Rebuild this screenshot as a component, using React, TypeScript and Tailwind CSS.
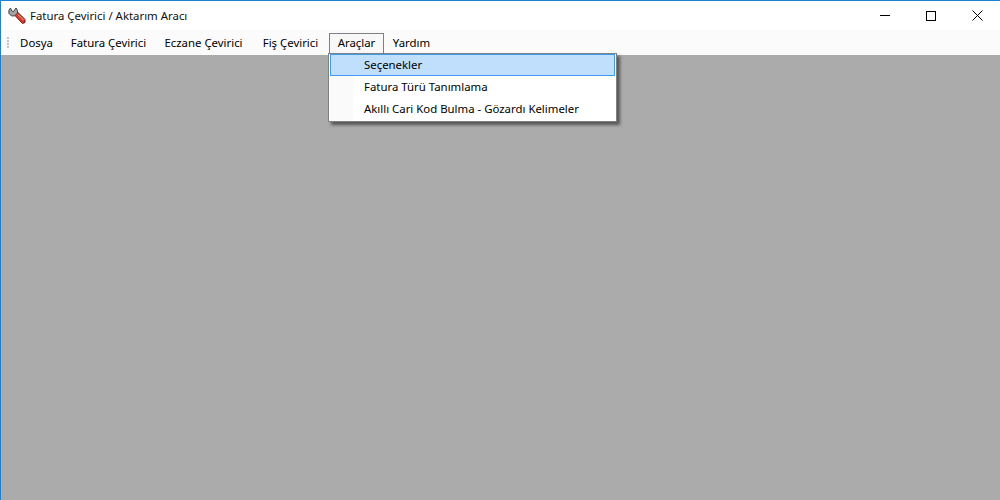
import React from 'react'

const font = { fontFamily: '"Noto Sans", sans-serif' }

function AppIcon() {
  return (
    <svg width="18" height="18" viewBox="0 0 18 18" className="shrink-0">
      {/* red handle */}
      <path d="M6.5 8 L9.5 5 L17 12.5 L17 15.5 L14.5 16.5 Z" fill="#d93a2b" stroke="#6f1c14" strokeWidth="1" />
      <path d="M10 7.5 L15.5 13" stroke="#f4a595" strokeWidth="1" />
      {/* wrench head */}
      <path d="M2.5 1 A5 5 0 0 0 1 6.5 A5 5 0 0 0 6.5 9 L9.5 6 A5 5 0 0 0 8 1 L5.5 4.5 L3.8 4 Z" fill="#a3a3a3" stroke="#444" strokeWidth="1" />
    </svg>
  )
}

const menus = [
  { label: 'Dosya', w: 'w-[51px]' },
  { label: 'Fatura Çevirici', w: 'w-[93px]' },
  { label: 'Eczane Çevirici', w: 'w-[97px]' },
  { label: 'Fiş Çevirici', w: 'w-[77px]' },
]

export default function App() {
  return (
    <div className="relative w-[1000px] h-[500px] overflow-hidden flex flex-col bg-white border-t border-l border-[#1883d7] text-black text-[11.4px]" style={font}>
      {/* Title bar */}
      <div className="h-[29px] flex items-center bg-white shrink-0">
        <div className="ml-[7px] mr-[4px] flex"><AppIcon /></div>
        <span className="text-[#111]">Fatura Çevirici / Aktarım Aracı</span>
        <div className="ml-auto flex items-center h-full">
          <div className="w-[46px] h-full flex items-center justify-center">
            <div className="w-[10px] h-px bg-black" />
          </div>
          <div className="w-[46px] h-full flex items-center justify-center">
            <div className="w-[10px] h-[10px] border border-black" />
          </div>
          <div className="w-[46px] h-full flex items-center justify-center">
            <svg width="11" height="11" viewBox="0 0 11 11"><path d="M0.5 0.5 L10.5 10.5 M10.5 0.5 L0.5 10.5" stroke="#000" strokeWidth="1" /></svg>
          </div>
        </div>
      </div>

      {/* Menu bar */}
      <div className="h-[25px] flex items-center bg-[#fbfbfb] shrink-0">
        <div className="ml-[6px] mr-[2px] w-[2px] flex flex-col gap-[1px]">
          <div className="w-[2px] h-[2px] bg-[#c4c4c4]" />
          <div className="w-[2px] h-[2px] bg-[#c4c4c4]" />
          <div className="w-[2px] h-[2px] bg-[#c4c4c4]" />
          <div className="w-[2px] h-[2px] bg-[#c4c4c4]" />
        </div>
        {menus.map(m => (
          <div key={m.label} className={`${m.w} h-full flex items-center justify-center`}>{m.label}</div>
        ))}
        <div className="w-[55px] h-[22px] self-end pb-[3px] flex items-center justify-center border border-b-0 border-[#808080] bg-[#f8f8f8]">Araçlar</div>
        <div className="w-[55px] h-full flex items-center justify-center">Yardım</div>
      </div>

      {/* MDI area */}
      <div className="flex-1 bg-[#ababab]" />

      {/* Dropdown */}
      <div className="absolute left-[327px] top-[52px] w-[289px] h-[69px] bg-white border border-[#808080] shadow-[3px_3px_3px_rgba(0,0,0,0.5)] px-[1px] flex flex-col">
        <div className="absolute left-[1px] top-0 bottom-0 w-[23px] bg-[#fafafa]" />
        <div className="relative h-[22px] pl-[33px] pb-[1px] flex items-center bg-[#bfdffc] border border-[#3f9bf0]">Seçenekler</div>
        <div className="relative h-[22px] pl-[34px] flex items-center">Fatura Türü Tanımlama</div>
        <div className="relative h-[22px] pl-[34px] flex items-center">Akıllı Cari Kod Bulma - Gözardı Kelimeler</div>
      </div>
    </div>
  )
}
